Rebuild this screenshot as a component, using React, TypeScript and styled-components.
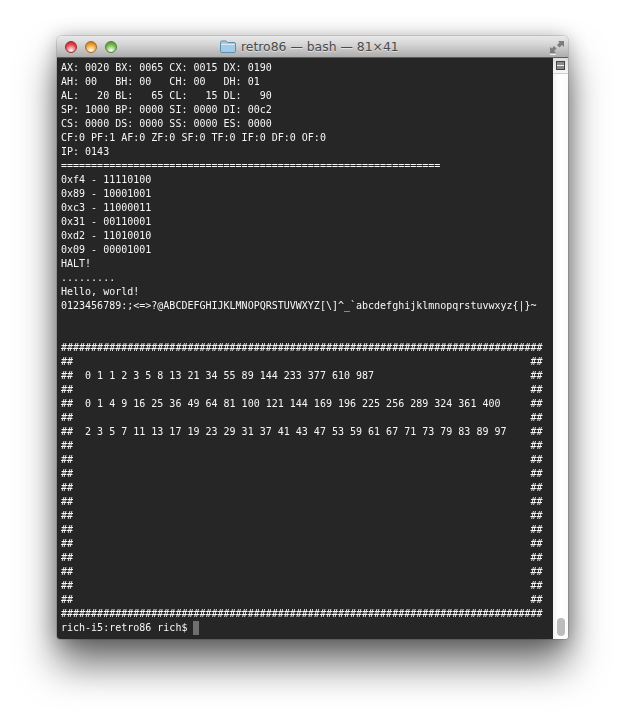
import React from 'react';
import styled, { createGlobalStyle } from 'styled-components';

const Global = createGlobalStyle`
html, body { margin: 0; padding: 0; background: #fff; }
`

const Page = styled.div`
width: 625px;
height: 718px;
overflow: hidden;
box-sizing: border-box;
padding: 36px 57px 0 57px;
background: #fff;
`

const Win = styled.div`
width: 511px;
height: 603px;
display: flex;
flex-direction: column;
border-radius: 5px 5px 3px 3px;
overflow: hidden;
box-shadow: 0 26px 38px rgba(0,0,0,.55), 0 2px 20px rgba(0,0,0,.3), 0 0 0 1px rgba(0,0,0,.12);
`

const TitleBar = styled.div`
height: 21px;
flex: none;
display: grid;
grid-template-columns: 155px auto 1fr;
align-items: center;
padding: 0 3px 0 8px;
background: linear-gradient(#e9e9e9, #d2d2d2 45%, #acacac);
border-bottom: 1px solid #5c5c5c;
`

const Lights = styled.div`
display: flex;
gap: 8px;
`

const Light = styled.span<{ $c: string; $d: string }>`
width: 12px;
height: 12px;
border-radius: 50%;
box-sizing: border-box;
border: 1px solid ${p => p.$d};
background: radial-gradient(circle at 50% 85%, #fff 0, ${p => p.$c} 60%, ${p => p.$d} 100%);
`

const Title = styled.div`
display: flex;
align-items: center;
gap: 5px;
font-family: 'DejaVu Sans', sans-serif;
font-size: 12.4px;
color: #4a4a4a;
text-shadow: 0 1px 0 rgba(255,255,255,.5);
white-space: nowrap;
`

const FullBtn = styled.div`
justify-self: end;
display: flex;
`

const Body = styled.div`
flex: 1;
min-height: 0;
display: flex;
`

const Term = styled.pre`
flex: 1;
margin: 0;
padding: 3px 0 0 4px;
background: #262626;
color: #f6f6f6;
font-family: 'DejaVu Sans Mono', monospace;
font-size: 10px;
line-height: 14px;
overflow: hidden;
filter: grayscale(1);
`

const Cursor = styled.span`
display: inline-block;
width: 6px;
height: 14px;
vertical-align: top;
background: #6f6f6f;
`

const ScrollBar = styled.div`
width: 15px;
flex: none;
display: flex;
flex-direction: column;
justify-content: space-between;
align-items: center;
background: linear-gradient(90deg, #f2f2f2, #fff 40%, #fbfbfb);
`

const SplitBtn = styled.div`
width: 15px;
height: 15px;
display: flex;
align-items: center;
justify-content: center;
background: linear-gradient(#dcdcdc, #f6f6f6);
border-bottom: 1px solid #cfcfcf;
`

const Thumb = styled.div`
width: 8px;
height: 18px;
margin-bottom: 3px;
border-radius: 4px;
background: #bcbcbc;
`

const hashes = '#'.repeat(80)
const side = '##' + ' '.repeat(76) + '##'
const row = (s: string) => '##  ' + s.padEnd(74) + '##'

const lines = [
  'AX: 0020 BX: 0065 CX: 0015 DX: 0190',
  'AH: 00   BH: 00   CH: 00   DH: 01',
  'AL:   20 BL:   65 CL:   15 DL:   90',
  'SP: 1000 BP: 0000 SI: 0000 DI: 00c2',
  'CS: 0000 DS: 0000 SS: 0000 ES: 0000',
  'CF:0 PF:1 AF:0 ZF:0 SF:0 TF:0 IF:0 DF:0 OF:0',
  'IP: 0143',
  '='.repeat(63),
  '0xf4 - 11110100',
  '0x89 - 10001001',
  '0xc3 - 11000011',
  '0x31 - 00110001',
  '0xd2 - 11010010',
  '0x09 - 00001001',
  'HALT!',
  '.........',
  'Hello, world!',
  '0123456789:;<=>?@ABCDEFGHIJKLMNOPQRSTUVWXYZ[\\]^_`abcdefghijklmnopqrstuvwxyz{|}~',
  '',
  '',
  hashes,
  side,
  row('0 1 1 2 3 5 8 13 21 34 55 89 144 233 377 610 987'),
  side,
  row('0 1 4 9 16 25 36 49 64 81 100 121 144 169 196 225 256 289 324 361 400'),
  side,
  row('2 3 5 7 11 13 17 19 23 29 31 37 41 43 47 53 59 61 67 71 73 79 83 89 97'),
  ...Array(12).fill(side),
  hashes,
]

function FolderIcon() {
  return (
    <svg width="16" height="13" viewBox="0 0 16 13">
      <path d="M.5 2.5 Q.5 1 2 1 H6 L7.5 2.5 H14 Q15.5 2.5 15.5 4 V11 Q15.5 12.5 14 12.5 H2 Q.5 12.5 .5 11 Z" fill="#a3cbe6" stroke="#5f8fb0" />
      <path d="M1 4.5 H15" stroke="#d6e9f5" />
    </svg>
  )
}

function FullIcon() {
  return (
    <svg width="16" height="16" viewBox="0 0 16 16">
      <path d="M9 2 H15 V8 L13 6 L10.5 8.5 L8 6 L10.5 3.5 Z" fill="#7d7d7d" />
      <path d="M1 8 V14 H7 L5 12 L7.5 9.5 L5 7 L3 9.5 Z" fill="#7d7d7d" />
      <path d="M1 15.5 H7" stroke="#eee" />
    </svg>
  )
}

function SplitIcon() {
  return (
    <svg width="9" height="9" viewBox="0 0 9 9">
      <rect x=".5" y=".5" width="8" height="8" fill="#8a8a8a" stroke="#444" />
      <path d="M1 4.5 H8" stroke="#eee" />
    </svg>
  )
}

export default function App() {
  return (
    <Page>
      <Global />
      <Win>
        <TitleBar>
          <Lights>
            <Light $c="#e8474a" $d="#96282c" />
            <Light $c="#f0a030" $d="#a8691a" />
            <Light $c="#70b84c" $d="#4a8230" />
          </Lights>
          <Title><FolderIcon />retro86 — bash — 81×41</Title>
          <FullBtn><FullIcon /></FullBtn>
        </TitleBar>
        <Body>
          <Term>
            {lines.join('\n')}
            {'\nrich-i5:retro86 rich$ '}
            <Cursor />
          </Term>
          <ScrollBar>
            <SplitBtn><SplitIcon /></SplitBtn>
            <Thumb />
          </ScrollBar>
        </Body>
      </Win>
    </Page>
  )
}
